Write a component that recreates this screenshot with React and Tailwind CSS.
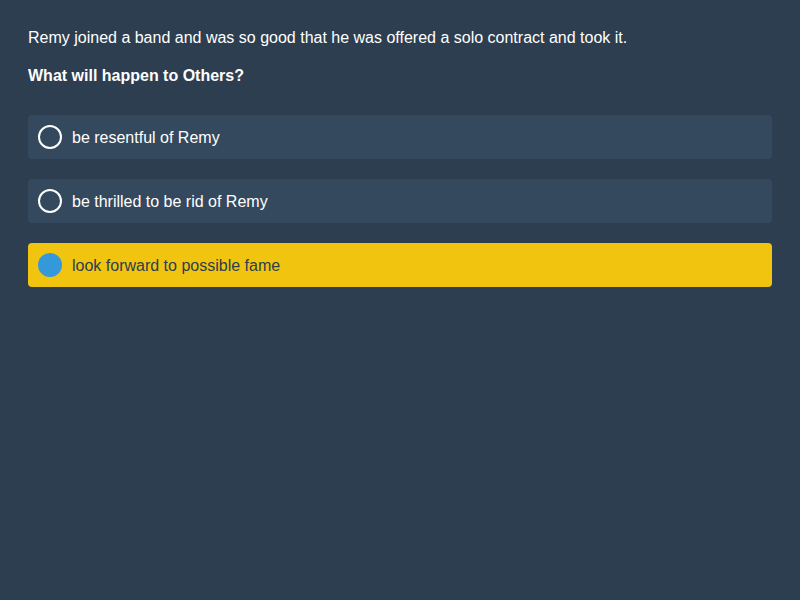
import React, { useState } from 'react';

const options = [
  'be resentful of Remy',
  'be thrilled to be rid of Remy',
  'look forward to possible fame',
];

export default function App() {
  const [selected, setSelected] = useState(2);

  return (
    <div className="min-h-screen w-full bg-[#2c3e50] px-[28px] pt-[29px] font-['Liberation_Sans',Arial,sans-serif] text-[16px] leading-[18px] text-white">
      <p>Remy joined a band and was so good that he was offered a solo contract and took it.</p>
      <p className="mt-[20px] font-bold">What will happen to Others?</p>

      <div className="mt-[30px] flex flex-col gap-[20px]">
        {options.map((opt, i) => {
          const active = i === selected;
          return (
            <button
              key={opt}
              onClick={() => setSelected(i)}
              className={
                active
                  ? 'flex h-[44px] w-full items-center gap-[10px] rounded-[4px] bg-[#f1c40f] px-[10px] text-left text-[#2c3e50]'
                  : 'flex h-[44px] w-full items-center gap-[10px] rounded-[4px] bg-[#34495e] px-[10px] text-left text-white'
              }
            >
              {active ? (
                <span className="h-[24px] w-[24px] shrink-0 rounded-full bg-[#3498db]" />
              ) : (
                <span className="h-[24px] w-[24px] shrink-0 rounded-full border-2 border-white" />
              )}
              <span className="pt-[2px]">{opt}</span>
            </button>
          );
        })}
      </div>
    </div>
  );
}
